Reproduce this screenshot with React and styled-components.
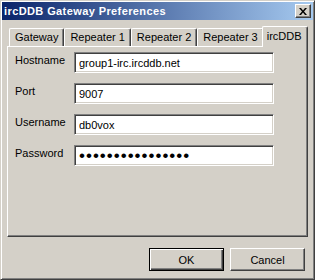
import React from 'react';
import styled, { createGlobalStyle } from 'styled-components';

const GlobalStyle = createGlobalStyle`
  html, body {
    margin: 0;
    padding: 0;
    background: #d4d0c8;
  }
  * {
    box-sizing: border-box;
  }
`;

const Window = styled.div`
  width: 315px;
  height: 280px;
  display: flex;
  flex-direction: column;
  padding: 1px;
  background: #d4d0c8;
  border: 1px solid;
  border-color: #d4d0c8 #404040 #404040 #d4d0c8;
  box-shadow: inset 1px 1px #fff, inset -1px -1px #808080;
  font-family: "Liberation Sans", Arial, sans-serif;
  font-size: 11px;
  color: #000;
`;

const TitleBar = styled.div`
  height: 18px;
  display: flex;
  align-items: center;
  justify-content: space-between;
  padding: 0 2px;
  background: linear-gradient(90deg, #0a246a 0%, #a6caf0 100%);
`;

const Title = styled.span`
  color: #fff;
  font-weight: bold;
  font-size: 11px;
  letter-spacing: 0.4px;
`;

const CloseButton = styled.button`
  width: 16px;
  height: 14px;
  padding: 0;
  display: flex;
  align-items: center;
  justify-content: center;
  background: #d4d0c8;
  border: 1px solid;
  border-color: #fff #404040 #404040 #fff;
  box-shadow: inset -1px -1px #808080;
`;

const Body = styled.div`
  flex: 1;
  display: flex;
  flex-direction: column;
  padding: 6px 5px 0 5px;
`;

const TabRow = styled.div`
  height: 20px;
  display: flex;
  align-items: flex-end;
  padding-left: 2px;
`;

const Tab = styled.div`
  position: relative;
  height: ${p => (p.$active ? '21px' : '18px')};
  margin-bottom: ${p => (p.$active ? '-1px' : '0')};
  margin-left: ${p => (p.$active ? '-2px' : '0')};
  z-index: ${p => (p.$active ? 1 : 0)};
  padding: ${p => (p.$active ? '0 5px 2px 4px' : '0 5px 1px 5px')};
  display: flex;
  align-items: center;
  background: #d4d0c8;
  border-top: 1px solid #fff;
  border-left: 1px solid #fff;
  border-right: 1px solid #404040;
  border-radius: 2px 2px 0 0;
  box-shadow: inset -1px 0 #808080;
  white-space: nowrap;
`;

const Panel = styled.div`
  height: 191px;
  padding: 5px 7px;
  border: 1px solid;
  border-color: #fff #404040 #404040 #fff;
  box-shadow: inset -1px -1px #808080;
`;

const Form = styled.div`
  display: grid;
  grid-template-columns: 59px 200px;
  row-gap: 10px;
  align-items: start;
`;

const Label = styled.label`
  padding-top: 2px;
  line-height: 13px;
`;

const Field = styled.input`
  width: 200px;
  height: 21px;
  margin: 0;
  padding: 0 4px;
  font-family: "Liberation Sans", Arial, sans-serif;
  font-size: ${p => (p.type === 'password' ? '17px' : '11px')};
  letter-spacing: ${p => (p.type === 'password' ? '1px' : '0')};
  color: #000;
  background: #fff;
  border: 1px solid;
  border-color: #808080 #fff #fff #808080;
  box-shadow: inset 1px 1px #404040, inset -1px -1px #d4d0c8;
  outline: none;
`;

const Footer = styled.div`
  display: flex;
  justify-content: flex-end;
  gap: 6px;
  padding: 11px 3px 0 0;
`;

const Button = styled.button`
  width: 75px;
  height: 23px;
  padding: 0;
  font-family: "Liberation Sans", Arial, sans-serif;
  font-size: 11px;
  color: #000;
  background: #d4d0c8;
  border: 1px solid;
  border-color: ${p => (p.$default ? '#000' : '#fff #404040 #404040 #fff')};
  box-shadow: ${p =>
    p.$default
      ? 'inset 1px 1px #fff, inset -1px -1px #404040, inset -2px -2px #808080'
      : 'inset -1px -1px #808080'};
`;

const tabs = ['Gateway', 'Repeater 1', 'Repeater 2', 'Repeater 3', 'ircDDB'];

const fields = [
  { label: 'Hostname', value: 'group1-irc.ircddb.net' },
  { label: 'Port', value: '9007' },
  { label: 'Username', value: 'db0vox' },
  { label: 'Password', value: 'xxxxxxxxxxxxxxxx', type: 'password' },
];

export default function App() {
  return (
    <>
      <GlobalStyle />
      <Window>
        <TitleBar>
          <Title>ircDDB Gateway Preferences</Title>
          <CloseButton aria-label="Close">
            <svg width="8" height="7" viewBox="0 0 8 7">
              <path d="M0 0h2l2 2.5L6 0h2L5 3.5 8 7H6L4 4.5 2 7H0l3-3.5z" fill="#000" />
            </svg>
          </CloseButton>
        </TitleBar>
        <Body>
          <TabRow>
            {tabs.map(t => (
              <Tab key={t} $active={t === 'ircDDB'}>{t}</Tab>
            ))}
          </TabRow>
          <Panel>
            <Form>
              {fields.map(f => (
                <React.Fragment key={f.label}>
                  <Label>{f.label}</Label>
                  <Field type={f.type || 'text'} value={f.value} readOnly />
                </React.Fragment>
              ))}
            </Form>
          </Panel>
          <Footer>
            <Button $default>OK</Button>
            <Button>Cancel</Button>
          </Footer>
        </Body>
      </Window>
    </>
  );
}
